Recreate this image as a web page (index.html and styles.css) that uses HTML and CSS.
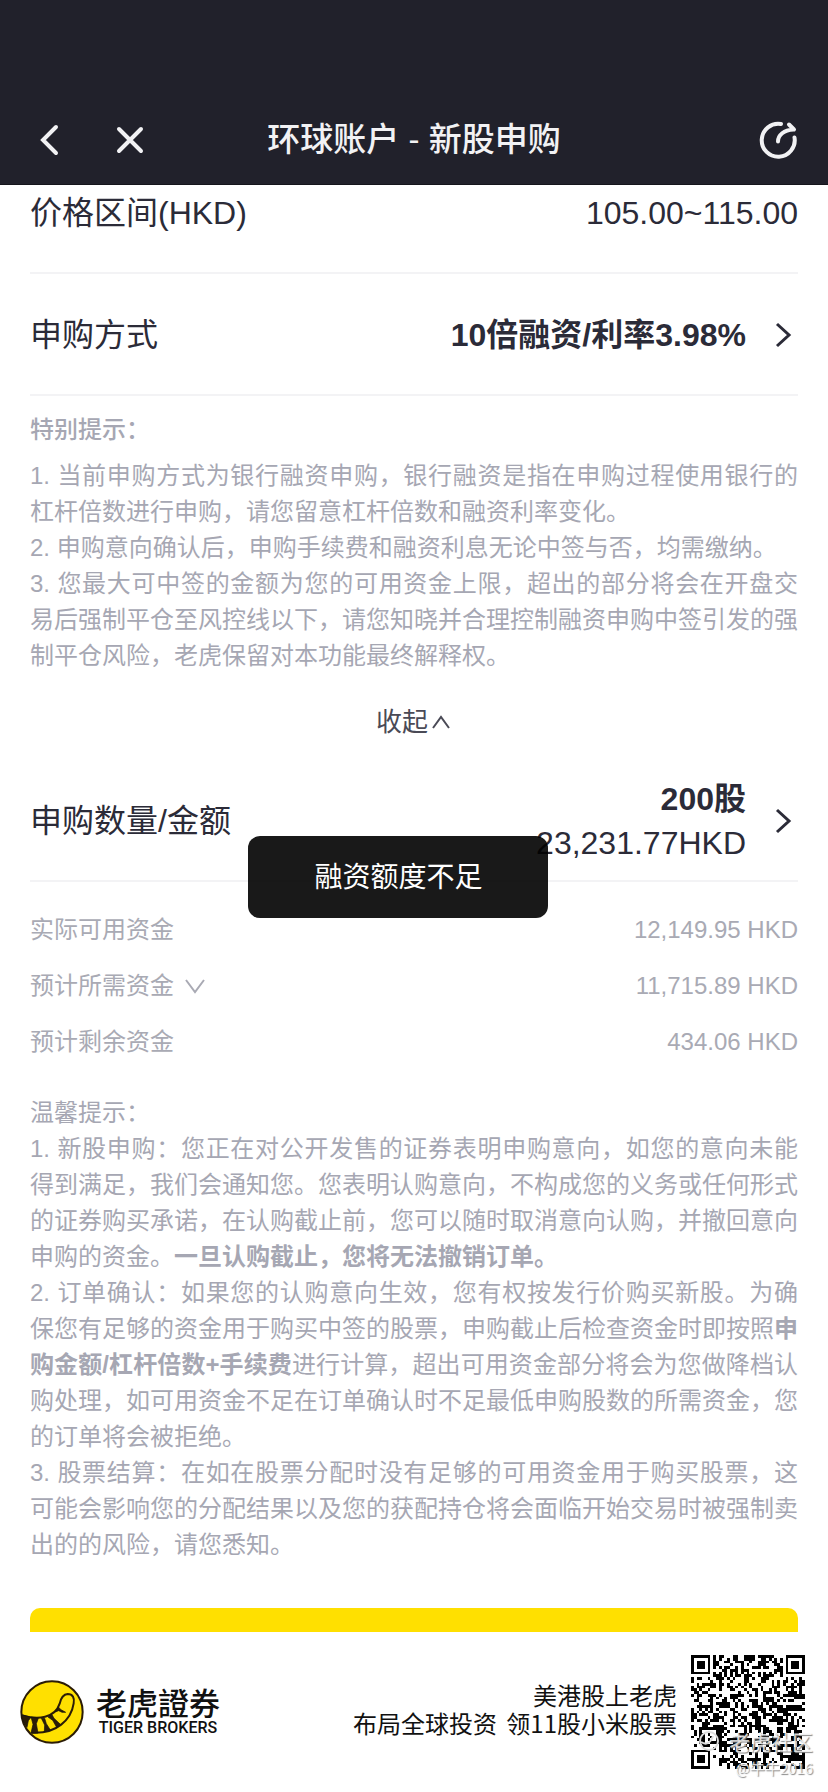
FILE: index.html
```html
<!DOCTYPE html>
<html lang="zh-CN">
<head>
    <meta charset="UTF-8">
    <meta name="viewport" content="width=device-width, initial-scale=1.0">
    <title>环球账户 - 新股申购</title>
    <link rel="stylesheet" href="styles.css">
</head>
<body>

<header class="navbar">
    <div class="nav-left">
        <button class="icon-btn" aria-label="返回">
            <svg width="24" height="34" viewBox="0 0 24 34"><path d="M18 4 L5 17 L18 30"/></svg>
        </button>
        <button class="icon-btn" aria-label="关闭">
            <svg width="30" height="30" viewBox="0 0 30 30"><path d="M4 4 L26 26 M26 4 L4 26"/></svg>
        </button>
    </div>
    <h1>环球账户 - 新股申购</h1>
    <div class="nav-right">
        <button class="icon-btn" aria-label="刷新">
            <svg width="40" height="40" viewBox="0 0 40 40">
                <path d="M23 4 A16.5 16.5 0 1 0 36.5 17.500"/>
                <path d="M20 21.500 C20 15 26 10 35.500 9.500 M31 4.500 L36 9.500"/>
            </svg>
        </button>
    </div>
</header>

<main class="content">
    <div class="row">
        <span>价格区间(HKD)</span>
        <span>105.00~115.00</span>
    </div>
    <button class="row">
        <span>申购方式</span>
        <span class="row-value">
            <b>10倍融资/利率3.98%</b>
            <svg class="arrow" width="24" height="30" viewBox="0 0 24 30"><path d="M3 4 L15 15 L3 26"/></svg>
        </span>
    </button>

    <!-- FINANCING NOTES -->
    <section class="notes special">
        <h2>特别提示：</h2>
        <p>1. 当前申购方式为银行融资申购，银行融资是指在申购过程使用银行的杠杆倍数进行申购，请您留意杠杆倍数和融资利率变化。</p>
        <p>2. 申购意向确认后，申购手续费和融资利息无论中签与否，均需缴纳。</p>
        <p>3. 您最大可中签的金额为您的可用资金上限，超出的部分将会在开盘交易后强制平仓至风控线以下，请您知晓并合理控制融资申购中签引发的强制平仓风险，老虎保留对本功能最终解释权。</p>
    </section>
    <button class="collapse">
        收起
        <svg width="22" height="18" viewBox="0 0 22 18"><path d="M3 15 L11 4 L19 15"/></svg>
    </button>

    <button class="row">
        <span>申购数量/金额</span>
        <span class="row-value">
            <span class="amount"><b>200股</b><br>23,231.77HKD</span>
            <svg class="arrow" width="24" height="30" viewBox="0 0 24 30"><path d="M3 4 L15 15 L3 26"/></svg>
        </span>
    </button>

    <!-- FUNDS -->
    <dl class="funds">
        <div><dt>实际可用资金</dt><dd>12,149.95 HKD</dd></div>
        <div>
            <dt>预计所需资金 <svg width="22" height="18" viewBox="0 0 22 18"><path d="M2 3 L11 15 L20 3"/></svg></dt>
            <dd>11,715.89 HKD</dd>
        </div>
        <div><dt>预计剩余资金</dt><dd>434.06 HKD</dd></div>
    </dl>

    <section class="notes">
        <p>温馨提示：</p>
        <p>1. 新股申购：您正在对公开发售的证券表明申购意向，如您的意向未能得到满足，我们会通知您。您表明认购意向，不构成您的义务或任何形式的证券购买承诺，在认购截止前，您可以随时取消意向认购，并撤回意向申购的资金。<b>一旦认购截止，您将无法撤销订单。</b></p>
        <p>2. 订单确认：如果您的认购意向生效，您有权按发行价购买新股。为确保您有足够的资金用于购买中签的股票，申购截止后检查资金时即按照<b>申购金额/杠杆倍数+手续费</b>进行计算，超出可用资金部分将会为您做降档认购处理，如可用资金不足在订单确认时不足最低申购股数的所需资金，您的订单将会被拒绝。</p>
        <p>3. 股票结算：在如在股票分配时没有足够的可用资金用于购买股票，这可能会影响您的分配结果以及您的获配持仓将会面临开始交易时被强制卖出的的风险，请您悉知。</p>
    </section>

    <div class="submit-wrap">
        <button class="submit" aria-label="提交"></button>
    </div>
</main>

<footer class="footer">
    <div class="brand">
        <svg width="64" height="64" viewBox="29 59 192 192">
            <circle cx="125" cy="155" r="92" fill="#ffe000" stroke="#2b1c06" stroke-width="6"/>
            <path d="M36 165 C82 179 134 174 148 130 C152 112 158 102 172 101 C188 101 193 114 190 129 C183 177 139 222 64 217" fill="none" stroke="#2b1c06" stroke-width="6"/>
            <path d="M34 163 L62 171 L54 181 L50 201 C40 188 35 176 34 163Z" fill="#2b1c06"/>
            <path d="M62 170 L84 174 L78 190 L83 218 L62 218 L68 192Z" fill="#2b1c06"/>
            <path d="M93 174 L103 174 L108 190 L120 209 L102 214 L103 194Z" fill="#2b1c06"/>
            <path d="M113 170 L125 163 L131 174 L150 192 L139 201 L127 180Z" fill="#2b1c06"/>
            <path d="M135 155 L144 140 L152 148 L166 156 L155 156 L145 151Z" fill="#2b1c06"/>
        </svg>
        <div class="brand-name">
            <strong>老虎證券</strong>
            <small>TIGER BROKERS</small>
        </div>
    </div>
    <div class="promo">
        <p>美港股上老虎<br>布局全球投资 <span class="bonus">领11股小米股票</span></p>
        <div class="qr">
            <svg width="114" height="114" viewBox="0 0 41 41" shape-rendering="crispEdges"><path id="qrPath"/></svg>
            <div class="watermark">
                <div class="mark-name">
                    <svg width="24" height="24" viewBox="0 0 24 24"><circle cx="12" cy="12" r="9"/><path d="M4 13 C10 17 14 13 16 7"/></svg>
                    老虎社区
                </div>
                <div class="mark-user">@牛牛2016</div>
            </div>
        </div>
    </div>
</footer>

<div class="toast" role="alert">融资额度不足</div>

<script src="qr.js"></script>
</body>
</html>
```

FILE: styles.css
```css
* {
    box-sizing: border-box;
}
body {
    margin: 0;
    position: relative;
    font-family: "Liberation Sans", "Noto Sans CJK SC", sans-serif;
    font-size: 24px;
    line-height: 36px;
    color: #2b2b38;
    background: #fff;
}
h1, h2, p, dl, dd {
    margin: 0;
}
button {
    padding: 0;
    border: none;
    background: none;
    font: inherit;
    color: inherit;
    cursor: pointer;
}
svg {
    display: block;
    fill: none;
    stroke: currentColor;
    stroke-width: 2;
}

/* top bar */
.navbar {
    position: relative;
    z-index: 1;
    display: grid;
    grid-template-columns: 1fr auto 1fr;
    align-items: center;
    height: 185px;
    padding: 96px 30px 0;
    background: #21212b;
    border-bottom: 1px solid #15151c;
    color: #f2f2f4;
}
.navbar h1 {
    font-size: 33px;
    font-weight: 500;
    line-height: 48px;
}
.nav-left {
    display: flex;
    align-items: center;
    gap: 53px;
    padding-left: 8px;
}
.nav-right {
    display: flex;
    justify-content: flex-end;
}
.icon-btn svg {
    stroke-width: 4;
    stroke-linecap: round;
}

/* the list is scrolled a little way under the top bar */
.content {
    margin-top: -33px;
    padding: 0 30px;
}
.row {
    display: flex;
    justify-content: space-between;
    align-items: center;
    width: 100%;
    height: 122px;
    padding-top: 2px;
    border-bottom: 2px solid #f3f3f5;
    font-size: 32px;
    line-height: 44px;
}
.row-value {
    display: flex;
    align-items: center;
    gap: 28px;
    text-align: right;
}
.arrow {
    stroke-width: 3;
}

.notes {
    color: #a6a7b3;
    text-align: justify;
    text-spacing-trim: space-all;
}
.notes h2 {
    margin-bottom: 10px;
    font-size: 24px;
    font-weight: 500;
}
.special {
    padding-top: 16px;
}
.collapse {
    display: flex;
    justify-content: center;
    align-items: center;
    width: 100%;
    height: 76px;
    margin-top: 10px;
    font-size: 26px;
    color: #4a4a56;
}
.collapse svg {
    margin-left: 2px;
}

.funds {
    padding: 20px 0 25px;
    color: #a9aab4;
}
.funds div {
    display: flex;
    justify-content: space-between;
    align-items: center;
    height: 56px;
}
.funds dt {
    display: flex;
    align-items: center;
    gap: 10px;
}

/* only the top edge of the button shows above the footer */
.submit-wrap {
    height: 24px;
    margin-top: 45px;
    overflow: hidden;
}
.submit {
    display: block;
    width: 100%;
    height: 88px;
    border-radius: 10px;
    background: #ffe000;
}

.footer {
    display: flex;
    justify-content: space-between;
    align-items: center;
    height: 160px;
    padding: 0 23px 0 20px;
    color: #111;
    font-family: "Noto Sans CJK SC", sans-serif;
}
.brand {
    display: flex;
    align-items: center;
    gap: 12px;
}
.brand-name {
    text-align: center;
}
.brand-name strong {
    display: block;
    font-family: "Noto Sans CJK TC", sans-serif;
    font-size: 31px;
    font-weight: 500;
    line-height: 32px;
}
.brand-name small {
    display: block;
    font-family: Roboto, sans-serif;
    font-size: 16px;
    font-weight: 500;
    line-height: 20px;
}
.promo {
    display: flex;
    align-items: center;
    gap: 14px;
    line-height: 28px;
    text-align: right;
}
.promo p {
    padding-bottom: 6px;
}
.bonus {
    margin-left: 4px;
}
.qr {
    position: relative;
}
.qr path {
    fill: #000;
    stroke: none;
}
.watermark {
    position: absolute;
    top: 72px;
    right: -8px;
    white-space: nowrap;
    color: rgba(255, 255, 255, 0.8);
    text-shadow: 1px 1px 1px #888;
    text-align: right;
}
.mark-name {
    display: flex;
    align-items: center;
    gap: 8px;
    font-size: 21px;
    line-height: 28px;
}
.mark-name svg,
.mark-name svg path {
    fill: none;
    stroke: #ddd;
    stroke-width: 2;
}
.mark-user {
    font-size: 15px;
    line-height: 26px;
}

.toast {
    position: absolute;
    top: 836px;
    left: 30%;
    width: 300px;
    padding-top: 2px;
    border-radius: 12px;
    background: rgba(0, 0, 0, 0.9);
    color: #fff;
    font-size: 28px;
    line-height: 80px;
    text-align: center;
}
```

FILE: qr.js
```js
const SIZE = 41;
let seed = 2016;

function nextBit() {
    seed = (seed * 1103515245 + 12345) % 2147483648;
    return seed > 1073741824;
}

// ring pattern around a centre: dark, light, dark by distance
function finder(x, y, cx, cy) {
    const d = Math.max(Math.abs(x - cx), Math.abs(y - cy));
    if (d > 4) return null;
    return d !== 2 && d !== 4;
}

function moduleAt(x, y) {
    const bit = nextBit();
    for (const [cx, cy] of [[3, 3], [SIZE - 4, 3], [3, SIZE - 4]]) {
        const f = finder(x, y, cx, cy);
        if (f !== null) return f;
    }
    const a = Math.max(Math.abs(x - 34), Math.abs(y - 34));
    if (a <= 2) return a !== 1;
    if (x === 6 || y === 6) return (x + y) % 2 === 0;
    return bit;
}

let d = "";
for (let y = 0; y < SIZE; y++) {
    for (let x = 0; x < SIZE; x++) {
        if (moduleAt(x, y)) d += `M${x} ${y}h1v1h-1z`;
    }
}
document.getElementById("qrPath").setAttribute("d", d);
```
